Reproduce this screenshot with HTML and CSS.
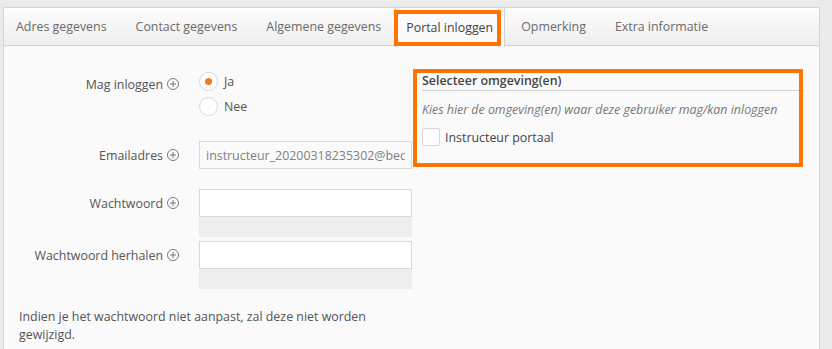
FILE: index.html
```html
<!DOCTYPE html>
<html lang="nl">
<head>
  <meta charset="UTF-8">
  <meta name="viewport" content="width=device-width, initial-scale=1.0">
  <title>Gebruiker - Portal inloggen</title>
  <link rel="stylesheet" href="styles.css">
</head>
<body>
  <div class="panel">
    <ul class="tabs">
      <li class="tab">Adres gegevens</li>
      <li class="tab">Contact gegevens</li>
      <li class="tab">Algemene gegevens</li>
      <li class="tab active">Portal inloggen</li>
      <li class="tab">Opmerking</li>
      <li class="tab">Extra informatie</li>
    </ul>

    <div class="content">
      <div class="form">
        <div class="row row-radios">
          <label class="label">Mag inloggen
            <svg class="info" width="12" height="12" viewBox="0 0 12 12"><circle cx="6" cy="6" r="5.5"/><path d="M6 3v6M3 6h6"/></svg>
          </label>
          <div class="radios">
            <label class="radio"><span class="dot checked"></span>Ja</label>
            <label class="radio"><span class="dot"></span>Nee</label>
          </div>
        </div>

        <div class="row row-email">
          <label class="label">Emailadres
            <svg class="info" width="12" height="12" viewBox="0 0 12 12"><circle cx="6" cy="6" r="5.5"/><path d="M6 3v6M3 6h6"/></svg>
          </label>
          <div class="field">
            <input type="text" class="input readonly" value="instructeur_20200318235302@bedrijf.nl">
          </div>
        </div>

        <div class="row row-pass">
          <label class="label">Wachtwoord
            <svg class="info" width="12" height="12" viewBox="0 0 12 12"><circle cx="6" cy="6" r="5.5"/><path d="M6 3v6M3 6h6"/></svg>
          </label>
          <div class="field">
            <input type="password" class="input">
            <div class="strength"></div>
          </div>
        </div>

        <div class="row row-pass2">
          <label class="label">Wachtwoord herhalen
            <svg class="info" width="12" height="12" viewBox="0 0 12 12"><circle cx="6" cy="6" r="5.5"/><path d="M6 3v6M3 6h6"/></svg>
          </label>
          <div class="field">
            <input type="password" class="input">
            <div class="strength"></div>
          </div>
        </div>

        <p class="note">Indien je het wachtwoord niet aanpast, zal deze niet worden gewijzigd.</p>
      </div>

      <div class="environments">
        <h4 class="env-title">Selecteer omgeving(en)</h4>
        <p class="env-help">Kies hier de omgeving(en) waar deze gebruiker mag/kan inloggen</p>
        <label class="check"><span class="box"></span>Instructeur portaal</label>
      </div>
    </div>
  </div>
</body>
</html>
```

FILE: styles.css
```css
* {
  margin: 0;
  padding: 0;
  box-sizing: border-box;
}

body {
  font-family: 'Open Sans', 'Noto Sans', sans-serif;
  font-size: 12.4px;
  color: #555;
  background: #ebebeb;
  padding: 7px 12px 0 3px;
}

.panel {
  background: #fafafa;
  border: 1px solid #d4d4d4;
  min-height: 400px;
}

/* tabs */
.tabs {
  list-style: none;
  display: flex;
  height: 38px;
  background: linear-gradient(#fdfdfd, #eeeeee);
  border-bottom: 1px solid #d2d2d2;
}

.tab {
  display: flex;
  align-items: center;
  padding: 0 12px;
  margin-right: 3px;
  border-left: 1px solid transparent;
  border-right: 1px solid transparent;
  color: #6a6a6a;
  white-space: nowrap;
}

.tab:first-child {
  margin-left: -1px;
}

.tab.active {
  position: relative;
  background: #fafafa;
  border-color: #d2d2d2;
  color: #444;
  height: 39px;
  padding: 0 11px 0 10px;
  margin-left: -2px;
}

.tab.active::after {
  content: '';
  box-sizing: border-box;
  position: absolute;
  left: -2px;
  top: 2px;
  right: 3px;
  height: 36px;
  border: 4px solid #ff7300;
}

/* content */
.content {
  display: flex;
  padding: 26px 0 0 15px;
}

.form {
  width: 393px;
  flex-shrink: 0;
}

.row {
  display: flex;
  gap: 20px;
}

.label {
  width: 160px;
  flex-shrink: 0;
  display: flex;
  align-items: center;
  justify-content: flex-end;
  gap: 4px;
  color: #555;
  height: 28px;
}

.info {
  fill: none;
  stroke: #777;
  stroke-width: 1;
}

.row-radios {
  margin-bottom: 25px;
}

.row-radios .label {
  height: 24px;
}

.radios {
  display: flex;
  flex-direction: column;
  gap: 6px;
}

.radio {
  display: flex;
  align-items: center;
  gap: 6px;
  height: 19px;
  color: #555;
}

.dot {
  width: 19px;
  height: 19px;
  border: 1px solid #d8d8d8;
  border-radius: 50%;
  background: #fff;
  position: relative;
}

.dot.checked::after {
  content: '';
  position: absolute;
  left: 5px;
  top: 5px;
  width: 7px;
  height: 7px;
  border-radius: 50%;
  background: #f47a1f;
}

.row-email {
  margin-bottom: 20px;
}

.row-pass {
  margin-bottom: 4px;
}

.field {
  width: 213px;
}

.input {
  display: block;
  width: 213px;
  height: 28px;
  padding: 0 6px;
  border: 1px solid #d9d9d9;
  background: #fff;
  font-family: inherit;
  font-size: 12.4px;
  color: #555;
  outline: none;
}

.input.readonly {
  background: #fafafa;
  color: #808080;
}

.strength {
  height: 20px;
  background: #eeeeee;
}

.note {
  margin-top: 19px;
  width: 360px;
  line-height: 18px;
  color: #555;
}

/* environments */
.environments {
  position: relative;
  width: 382px;
  margin-left: 10px;
  padding-bottom: 17px;
}

.environments::after {
  content: '';
  box-sizing: border-box;
  position: absolute;
  left: -9px;
  top: -3px;
  width: 390px;
  height: 98px;
  border: 4px solid #ff7300;
}

.env-title {
  font-size: 12.4px;
  font-weight: 600;
  color: #444;
  line-height: 18px;
  border-bottom: 1px solid #d2d2d2;
}

.env-help {
  margin-top: 10px;
  font-style: italic;
  color: #777;
  line-height: 18px;
}

.check {
  display: flex;
  align-items: center;
  gap: 5px;
  margin-top: 9px;
  color: #444;
  height: 18px;
}

.box {
  width: 18px;
  height: 18px;
  border: 1px solid #d8d8d8;
  border-radius: 2px;
  background: #fff;
}
```
